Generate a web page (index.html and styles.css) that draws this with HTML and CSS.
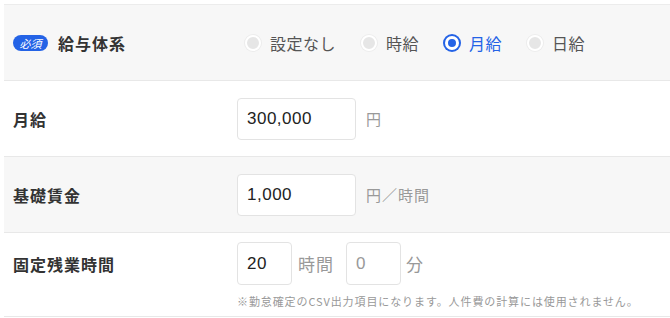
FILE: index.html
```html
<!DOCTYPE html>
<html lang="ja">
<head>
<meta charset="utf-8">
<link rel="stylesheet" href="styles.css">
</head>
<body>
<div class="form">
  <div class="row gray">
    <div class="label"><span class="badge">必須</span><span>給与体系</span></div>
    <div class="field radios">
      <label class="radio"><span class="dot"></span>設定なし</label>
      <label class="radio"><span class="dot"></span>時給</label>
      <label class="radio checked"><span class="dot"></span>月給</label>
      <label class="radio"><span class="dot"></span>日給</label>
    </div>
  </div>
  <div class="row">
    <div class="label">月給</div>
    <div class="field"><div class="input wide">300,000</div><span class="unit">円</span></div>
  </div>
  <div class="row gray">
    <div class="label">基礎賃金</div>
    <div class="field"><div class="input wide">1,000</div><span class="unit">円／時間</span></div>
  </div>
  <div class="row top">
    <div class="label tall">固定残業時間</div>
    <div class="stack">
      <div class="field"><div class="input small">20</div><span class="unit big">時間</span><div class="input small ph">0</div><span class="unit big">分</span></div>
      <div class="note">※勤怠確定のCSV出力項目になります。人件費の計算には使用されません。</div>
    </div>
  </div>
</div>
</body>
</html>
```

FILE: styles.css
```css
html, body { margin: 0; padding: 0; background: #fff; }
body {
  font-family: "Noto Sans CJK JP", "Noto Sans", sans-serif;
  color: #333;
  overflow: hidden;
  width: 670px;
  height: 318px;
}
.form {
  margin: 4px 0 0 4px;
  width: 680px;
  border-top: 1px solid #ececec;
}
.row {
  display: grid;
  grid-template-columns: 224px 1fr;
  align-items: center;
  padding-left: 9px;
  height: 75px;
  border-bottom: 1px solid #e8e8e8;
}
.row.gray { background: #f7f7f7; }
.row.top { align-items: start; height: 83px; }
.label {
  display: flex;
  align-items: center;
  font-size: 16px;
  font-weight: bold;
  letter-spacing: 1px;
  color: #333;
}
.label.tall { height: 43px; margin-top: 9px; }
.badge {
  display: inline-flex;
  align-items: center;
  justify-content: center;
  width: 35px;
  height: 16px;
  border-radius: 8px;
  background: #2463e6;
  color: #fff;
  font-size: 11px;
  font-weight: normal;
  font-style: italic;
  letter-spacing: 0;
  margin-right: 10px;
}
.field { display: flex; align-items: center; }
.radios { padding-left: 8px; font-size: 16px; color: #555; letter-spacing: 0.5px; }
.radio { display: flex; align-items: center; margin-right: 25px; }
.radio .dot {
  width: 12px;
  height: 12px;
  border-radius: 50%;
  background: #e6e6e6;
  border: 2px solid #fff;
  box-shadow: 0 0 0 1px #ececec;
  margin-right: 9px;
}
.radio.checked { color: #2463e6; }
.radio.checked .dot {
  width: 8px;
  height: 8px;
  background: #2463e6;
  border: 3px solid #fff;
  box-shadow: 0 0 0 2px #2463e6;
  margin: 0 10px 0 1px;
}
.input {
  box-sizing: border-box;
  height: 42px;
  border: 1px solid #e3e3e3;
  border-radius: 4px;
  background: #fff;
  display: flex;
  align-items: center;
  padding-left: 9px;
  font-family: "Liberation Sans", Arial, sans-serif;
  font-size: 17px;
  letter-spacing: 0.5px;
  color: #222;
}
.input.wide { width: 119px; }
.input.small { width: 55px; height: 43px; }
.input.ph { color: #999; }
.unit { font-size: 15px; color: #999; margin-left: 10px; letter-spacing: 1px; }
.unit.big { font-size: 17px; margin-left: 6px; margin-right: 12px; }
.unit.big:last-child { margin-left: 5px; }
.stack { padding-top: 9px; }
.note { margin-top: 8px; font-size: 11px; color: #999; letter-spacing: 0.9px; }
```
